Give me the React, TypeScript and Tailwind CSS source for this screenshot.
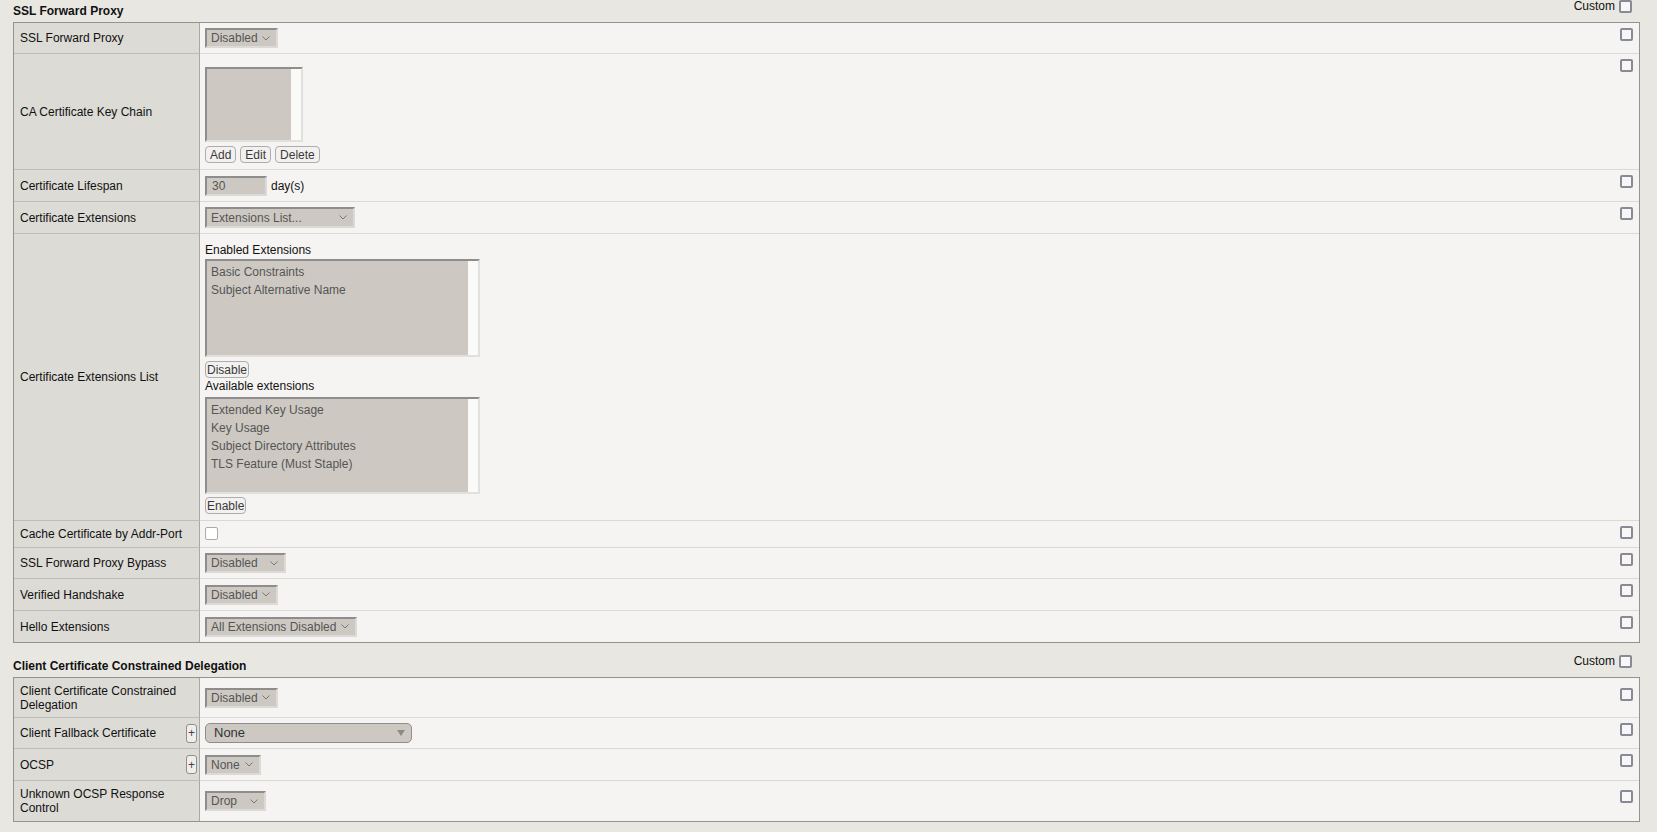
import type { ReactNode } from 'react';

const Chevron = () => (
  <svg width="8" height="5" viewBox="0 0 8 5" className="shrink-0">
    <path d="M0.5 0.5 L4 4 L7.5 0.5" fill="none" stroke="#777" strokeWidth="1" />
  </svg>
);

const Check = () => (
  <div className="h-[13px] w-[13px] rounded-[2px] border-2 border-[#8a8996] bg-[#f7f7f7]" />
);

const Sel = ({ text, className = '' }: { text: string; className?: string }) => (
  <div
    className={`flex h-[20px] items-center justify-between border-2 border-t-[#8d8d8d] border-l-[#8d8d8d] border-r-[#dcdad6] border-b-[#dcdad6] bg-[#cdc9c2] pl-[4px] pr-[6px] leading-[14px] text-[#555] ${className}`}
  >
    <span>{text}</span>
    <Chevron />
  </div>
);

const Btn = ({ text, className = 'px-[4px]' }: { text: string; className?: string }) => (
  <div
    className={`flex h-[17px] items-center rounded-[4px] border border-[#adadad] bg-[#f2f1ef] leading-[14px] text-[#3a3a3a] ${className}`}
  >
    {text}
  </div>
);

const ListBox = ({
  items,
  className,
}: {
  items: string[];
  className: string;
}) => (
  <div
    className={`flex border-2 border-t-[#8d8d8d] border-l-[#8d8d8d] border-r-[#e2e0dc] border-b-[#e2e0dc] ${className}`}
  >
    <div className="flex flex-1 flex-col bg-[#cdc9c2] pl-[4px] pt-[2px] text-[#555]">
      {items.map((it) => (
        <div key={it} className="h-[18px] leading-[18px]">
          {it}
        </div>
      ))}
    </div>
    <div className="w-[10px] bg-[#fafaf9]" />
  </div>
);

const PlusBtn = () => (
  <div className="flex h-[19px] w-[11px] shrink-0 items-center justify-center rounded-[3px] border border-[#8f8f8f] bg-[#efeeec] text-[12px] leading-none text-[#444]">
    +
  </div>
);

type RowProps = {
  label: ReactNode;
  h: string;
  children?: ReactNode;
  check?: string | null;
  last?: boolean;
  valueClass?: string;
  plus?: boolean;
};

const Row = ({
  label,
  h,
  children,
  check = 'pt-[5px]',
  last = false,
  valueClass = 'items-center',
  plus = false,
}: RowProps) => (
  <div className={`flex ${h}`}>
    <div
      className={`flex w-[186px] shrink-0 items-center justify-between border-r border-r-[#a9a8a4] bg-[#dcdbd6] pl-[6px] pr-[2px] leading-[14px] ${
        last ? '' : 'border-b border-b-[#bebdb9]'
      }`}
    >
      <span>{label}</span>
      {plus && <PlusBtn />}
    </div>
    <div className={`flex flex-1 bg-[#f5f4f2] ${last ? '' : 'border-b border-b-[#dad9d6]'}`}>
      <div className={`flex flex-1 pl-[5px] ${valueClass}`}>{children}</div>
      <div className={`w-[19px] shrink-0 ${check ?? ''}`}>{check !== null && <Check />}</div>
    </div>
  </div>
);

const Header = ({ title, h }: { title: string; h: string }) => (
  <div className={`flex items-end justify-between ${h}`}>
    <div className="mb-[4px] text-[12px] font-bold leading-[14px]">{title}</div>
    <div className="mb-[9px] flex items-center pr-[8px] leading-[14px]">
      <span>Custom</span>
      <div className="ml-[4px] h-[13px] w-[13px] rounded-[2px] border-2 border-[#8a8996] bg-[#f7f7f7]" />
    </div>
  </div>
);

export default function App() {
  return (
    <div className="min-h-screen overflow-hidden bg-[#e8e7e2] pl-[13px] pr-[17px] font-['Liberation_Sans',Arial,sans-serif] text-[12px] text-[#111]">
      <Header title="SSL Forward Proxy" h="h-[22px]" />
      <div className="border border-[#949390]">
        <Row label="SSL Forward Proxy" h="h-[31px]">
          <Sel text="Disabled" className="w-[73px]" />
        </Row>
        <Row label="CA Certificate Key Chain" h="h-[116px]" valueClass="flex-col items-start pt-[13px]">
          <ListBox items={[]} className="h-[75px] w-[98px]" />
          <div className="mt-[4px] flex gap-[4px]">
            <Btn text="Add" />
            <Btn text="Edit" />
            <Btn text="Delete" />
          </div>
        </Row>
        <Row label="Certificate Lifespan" h="h-[32px]">
          <div className="flex h-[20px] w-[62px] items-center border-2 border-t-[#8d8d8d] border-l-[#8d8d8d] border-r-[#dcdad6] border-b-[#dcdad6] bg-[#cdc9c2] pl-[5px] text-[#555]">
            30
          </div>
          <span className="ml-[4px]">day(s)</span>
        </Row>
        <Row label="Certificate Extensions" h="h-[32px]">
          <Sel text="Extensions List..." className="!h-[21px] w-[150px]" />
        </Row>
        <Row
          label="Certificate Extensions List"
          h="h-[287px]"
          check={null}
          valueClass="flex-col items-start pt-[9px]"
        >
          <div className="leading-[14px]">Enabled Extensions</div>
          <ListBox
            items={['Basic Constraints', 'Subject Alternative Name']}
            className="mt-[2px] h-[98px] w-[275px]"
          />
          <Btn text="Disable" className="mt-[4px] px-[1px]" />
          <div className="mt-[1px] leading-[14px]">Available extensions</div>
          <ListBox
            items={[
              'Extended Key Usage',
              'Key Usage',
              'Subject Directory Attributes',
              'TLS Feature (Must Staple)',
            ]}
            className="mt-[4px] h-[97px] w-[275px]"
          />
          <Btn text="Enable" className="mt-[3px] px-[1px]" />
        </Row>
        <Row label="Cache Certificate by Addr-Port" h="h-[27px]">
          <div className="-mt-[1px] h-[13px] w-[13px] rounded-[2px] border border-[#ababab] bg-white" />
        </Row>
        <Row label="SSL Forward Proxy Bypass" h="h-[31px]">
          <Sel text="Disabled" className="w-[81px]" />
        </Row>
        <Row label="Verified Handshake" h="h-[32px]">
          <Sel text="Disabled" className="w-[73px]" />
        </Row>
        <Row label="Hello Extensions" h="h-[31px]" last>
          <Sel text="All Extensions Disabled" className="w-[152px]" />
        </Row>
      </div>

      <Header title="Client Certificate Constrained Delegation" h="h-[34px]" />
      <div className="border border-[#949390]">
        <Row
          label={
            <>
              Client Certificate Constrained
              <br />
              Delegation
            </>
          }
          h="h-[40px]"
          check="pt-[10px]"
        >
          <Sel text="Disabled" className="w-[73px]" />
        </Row>
        <Row label="Client Fallback Certificate" h="h-[31px]" plus>
          <div className="flex h-[20px] w-[207px] items-center justify-between rounded-[5px] border border-[#8e8e8e] bg-[#cdc9c2] pl-[8px] pr-[6px] text-[13px] text-[#333]">
            <span>None</span>
            <svg width="8" height="6" viewBox="0 0 8 6">
              <path d="M0 0 H8 L4 6 Z" fill="#8a8a8a" />
            </svg>
          </div>
        </Row>
        <Row label="OCSP" h="h-[32px]" plus>
          <Sel text="None" className="w-[56px]" />
        </Row>
        <Row
          label={
            <>
              Unknown OCSP Response
              <br />
              Control
            </>
          }
          h="h-[40px]"
          check="pt-[9px]"
          last
        >
          <Sel text="Drop" className="w-[61px]" />
        </Row>
      </div>
    </div>
  );
}
